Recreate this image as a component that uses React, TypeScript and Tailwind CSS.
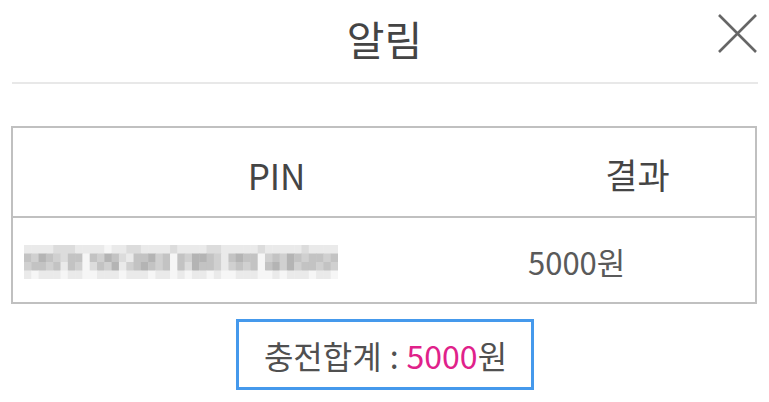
const FONT = "font-['Noto_Sans_CJK_KR','Noto_Sans',sans-serif]";

// blurred pin, drawn as a mosaic
const MOSAIC = [
  'eeeedddeeeefeeddeeeedeeeeddeeeeedeeeeedeeee',
  'bcabcdbbfbcabdebbacbfbcaabcebabbfcbcabcbbcb',
  'cbbcbebcfdbcaecbabcbfbdabbcecbcbfbacacbbcbc',
  'efeeefeeffeeefeeefeefefeefeffeeeffefeeefeef',
];
const SHADE: Record<string, string> = {
  a: '#b4b4b4',
  b: '#c3c3c3',
  c: '#d0d0d0',
  d: '#dcdcdc',
  e: '#eaeaea',
  f: '#f6f6f6',
};

function PinMosaic() {
  const cw = 314 / MOSAIC[0].length;
  return (
    <svg width={314} height={34} viewBox="0 0 314 34">
      {MOSAIC.map((row, r) =>
        row.split('').map((ch, c) => (
          <rect
            key={`${r}-${c}`}
            x={c * cw}
            y={r * 8.5}
            width={cw + 0.5}
            height={9}
            fill={SHADE[ch]}
          />
        )),
      )}
    </svg>
  );
}

export default function App() {
  return (
    <div className={`w-[769px] h-[402px] bg-white text-[#454545] ${FONT}`}>
      {/* Title bar */}
      <div className="relative flex h-[82px] items-center justify-center pb-[6px]">
        <h1 className="text-[41px] leading-none text-[#444]">알림</h1>
        <button
          className="absolute right-[12px] top-[14px] flex size-[39px] items-center justify-center text-[#666]"
          aria-label="닫기"
        >
          <svg width={39} height={39} viewBox="0 0 39 39" stroke="currentColor" strokeWidth={2.6}>
            <path d="M1 1 L38 38 M38 1 L1 38" />
          </svg>
        </button>
      </div>
      <div className="ml-[12px] mr-[11px] h-[2px] bg-[#e8e8e8]" />

      {/* Result table */}
      <div className="ml-[11px] mr-[12px] mt-[42px] border-2 border-[#c0c0c0]">
        <div className="flex h-[90px] items-center border-b-2 border-[#c0c0c0] text-[35px] leading-none">
          <div className="w-[527px] pt-[4px] text-center">PIN</div>
          <div className="flex-1 pr-[20px] pt-[2px] text-center">결과</div>
        </div>
        <div className="flex h-[84px] items-center">
          <div className="w-[515px] pl-[11px] pt-[4px]">
            <PinMosaic />
          </div>
          <div className="pt-[2px] text-[31px] leading-none text-[#5a5a5a]">5000원</div>
        </div>
      </div>

      {/* Total */}
      <div className="mx-auto mt-[15px] flex h-[71px] w-[298px] items-center justify-center border-[3px] border-[#4599ec] pl-[2px] text-[32px] leading-none text-[#505050]">
        <span>충전합계</span>
        <span className="mx-[8px]">:</span>
        <span className="text-[#e0218a]">5000</span>
        <span>원</span>
      </div>
    </div>
  );
}
